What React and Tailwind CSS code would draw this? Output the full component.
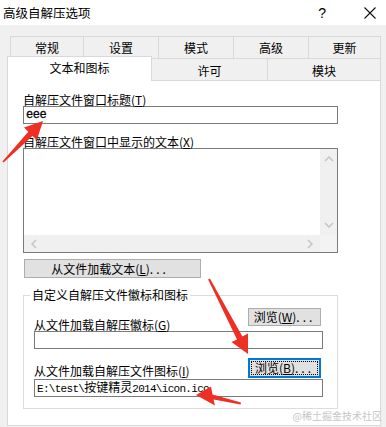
import React from "react";

function Tab({ w, label, last }) {
  return (
    <div
      className={`flex items-center justify-center border-l border-t border-[#d9d9d9] bg-[#f0f0f0] text-[12px] leading-[14px] text-black ${last ? "border-r" : ""}`}
      style={{ width: w }}
    >
      {label}
    </div>
  );
}

function Input({ children, className = "" }) {
  return (
    <div
      className={`flex h-[18px] items-center border border-[#7a7a7a] bg-white pl-[2px] ${className}`}
    >
      {children}
    </div>
  );
}

function Btn({ children, className = "" }) {
  return (
    <div
      className={`flex items-center justify-center border border-[#adadad] bg-[#e1e1e1] text-[12px] leading-[14px] text-black ${className}`}
    >
      {children}
    </div>
  );
}

function Chevron({ dir }) {
  const paths = {
    up: "M1 6 L5 2 L9 6",
    down: "M1 2 L5 6 L9 2",
    left: "M6 1 L2 5 L6 9",
    right: "M2 1 L6 5 L2 9",
  };
  const vertical = dir === "up" || dir === "down";
  return (
    <svg
      width={vertical ? 10 : 8}
      height={vertical ? 8 : 10}
      viewBox={vertical ? "0 0 10 8" : "0 0 8 10"}
      fill="none"
      stroke="#c2c2c2"
      strokeWidth="1.4"
    >
      <path d={paths[dir]} />
    </svg>
  );
}

export default function App() {
  return (
    <div className="relative h-[427px] w-[386px] overflow-hidden bg-[#f0f0f0] font-['Noto_Sans_CJK_SC',sans-serif] text-black">
      {/* title bar */}
      <div className="flex h-[25px] items-center bg-white pl-[3px]">
        <span className="text-[12.5px] leading-[16px]">高级自解压选项</span>
        <span className="ml-auto mr-[38px] font-['Liberation_Sans',sans-serif] text-[14px] leading-[16px]">?</span>
        <svg width="12" height="12" viewBox="0 0 12 12" className="mr-[10px]" stroke="#111" strokeWidth="1.1">
          <path d="M0.5 0.5 L11.5 11.5 M11.5 0.5 L0.5 11.5" />
        </svg>
      </div>

      {/* tabs */}
      <div className="ml-[7px] mt-[11px] w-[374px]">
        <div className="ml-[3px] flex h-[22px]">
          <Tab w={73} label="常规" />
          <Tab w={75} label="设置" />
          <Tab w={75} label="模式" />
          <Tab w={75} label="高级" />
          <Tab w={73} label="更新" last />
        </div>
        <div className="flex h-[22px] items-start">
          <div className="relative z-10 mt-[-2px] flex h-[25px] w-[145px] items-start justify-center border-l border-r border-t border-[#d9d9d9] bg-white pt-[4px] text-[12px] leading-[14px]">
            文本和图标
          </div>
          <div className="flex h-[22px] w-[115px] items-center justify-center border-t border-[#d9d9d9] bg-[#f0f0f0] pt-[2px] text-[12px] leading-[14px]">
            许可
          </div>
          <div className="flex h-[22px] w-[114px] items-center justify-center border-l border-r border-t border-[#d9d9d9] bg-[#f0f0f0] pt-[2px] text-[12px] leading-[14px]">
            模块
          </div>
        </div>

        {/* panel */}
        <div className="h-[346px] border border-[#d9d9d9] bg-white pl-[15px] pt-[12px] text-[12px]">
          <div className="h-[13px] leading-[13px]">
            自解压文件窗口标题(<span className="underline">T</span>)
          </div>
          <Input className="w-[315px]">
            <span className="font-['Liberation_Mono',monospace] text-[12px] leading-[14px] tracking-[-0.5px] [-webkit-text-stroke:0.3px_black]">eee</span>
          </Input>
          <div className="mt-[11px] h-[13px] leading-[13px]">
            自解压文件窗口中显示的文本(<span className="underline">X</span>)
          </div>
          <div className="grid h-[105px] w-[315px] grid-cols-[1fr_17px] grid-rows-[1fr_17px] border border-[#7a7a7a] bg-white">
            <div className="bg-white" />
            <div className="flex flex-col items-center justify-between bg-[#f0f0f0] py-[6px]">
              <Chevron dir="up" />
              <Chevron dir="down" />
            </div>
            <div className="flex items-center justify-between bg-[#f0f0f0] px-[6px]">
              <Chevron dir="left" />
              <Chevron dir="right" />
            </div>
            <div className="bg-[#f3f3f3]" />
          </div>

          <Btn className="ml-[1px] mt-[6px] h-[19px] w-[177px] pr-[5px]">
            从文件加载文本(<span className="underline">L</span>)<span className="tracking-[3px]">...</span>
          </Btn>

          <fieldset className="mt-[10px] h-[121px] w-[315px] border border-[#dcdcdc] pl-[10px] pr-[14px]">
            <legend className="ml-[-4px] px-[2px] text-[12px] leading-[14px]">自定义自解压文件徽标和图标</legend>
            <div className="mt-[6px] flex h-[23px] items-start justify-between">
              <span className="self-end leading-[13px]">
                从文件加载自解压徽标(<span className="underline">G</span>)
              </span>
              <Btn className="mr-[2px] h-[18px] w-[73px]">
                浏览(<span className="underline">W</span>)<span className="tracking-[3px]">...</span>
              </Btn>
            </div>
            <Input className="w-[289px]" />
            <div className="mt-[9px] flex h-[21px] items-start justify-between">
              <span className="mb-[2px] self-end leading-[12px]">
                从文件加载自解压文件图标(<span className="underline">I</span>)
              </span>
              <div className="mr-[2px] h-[20px] w-[73px] border-2 border-[#0078d7] bg-[#e1e1e1] p-[1px]">
                <div className="flex h-full items-center justify-center border border-dotted border-black text-[12px] leading-[14px]">
                  浏览(<span className="underline">B</span>)<span className="tracking-[3px]">...</span>
                </div>
              </div>
            </div>
            <Input className="w-[289px]">
              <span className="whitespace-nowrap font-['Liberation_Mono','Noto_Sans_CJK_SC',monospace] text-[11px] leading-[12px]">
                <span className="tracking-[-0.7px]">E:\test\</span>
                <span className="font-['Noto_Sans_CJK_SC',sans-serif] text-[12px]">按键精灵</span>
                <span className="tracking-[-0.7px]">2014\icon.ico</span>
              </span>
            </Input>
          </fieldset>
        </div>
      </div>

      {/* watermark */}
      <div className="absolute bottom-[5px] right-[4px] text-[10px] leading-[12px] text-[#c6c6c6]">@稀土掘金技术社区</div>

      {/* red annotation arrows */}
      <svg className="pointer-events-none absolute left-0 top-0" width="386" height="427" viewBox="0 0 386 427">
        <polygon
          fill="#ee2f24"
          points="43,121 36.8,140.2 32.5,136 3.6,162.6 2.4,161.4 28.3,131.8 24,127.6"
        />
        <polygon
          fill="#ee2f24"
          points="209.9,278.5 242.4,336.6 248,333.5 248,354 231.5,342 237,339.4 208.1,279.5"
        />
        <polygon
          fill="#ee2f24"
          points="196,395 211,386.5 212.5,394.5 241,402.4 240.6,404.6 213.5,399.5 215,405.5"
        />
      </svg>
    </div>
  );
}
